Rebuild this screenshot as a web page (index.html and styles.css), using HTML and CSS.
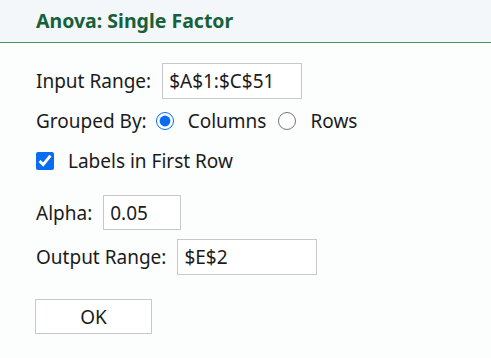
FILE: index.html
```html
<!DOCTYPE html>
<html lang="en">
<head>
  <meta charset="UTF-8" />
  <title>Anova: Single Factor</title>
  <link rel="stylesheet" href="styles.css">
</head>
<body>
<div class="dialog-header">
  <strong>Anova: Single Factor</strong>
</div>

<div class="dialog-body">
  <div class="form-row">
    <label for="inputRange">Input Range:</label>
    <input type="text" id="inputRange" class="range-input" value="$A$1:$C$51">
  </div>

  <div class="form-row grouped-row">
    <span>Grouped By:</span>
    <label class="radio-option"><input type="radio" name="grouped" checked> Columns</label>
    <label class="radio-option"><input type="radio" name="grouped"> Rows</label>
  </div>

  <div class="form-row check-row">
    <label class="check-option"><input type="checkbox" checked> Labels in First Row</label>
  </div>

  <div class="form-row alpha-row">
    <label for="alpha">Alpha:</label>
    <input type="text" id="alpha" class="alpha-input" value="0.05">
  </div>

  <div class="form-row output-row">
    <label for="outputRange">Output Range:</label>
    <input type="text" id="outputRange" class="range-input" value="$E$2">
  </div>

  <button class="ok-btn">OK</button>
</div>
</body>
</html>
```

FILE: styles.css
```css
body {
  margin: 0;
  background-color: #fcfdfd;
  color: #1b1b1b;
  font-family: "Segoe UI", "Noto Sans", "Open Sans", sans-serif;
  font-size: 19px;
  line-height: 24px;
}
.dialog-header {
  height: 42px;
  display: flex;
  align-items: center;
  padding-left: 36px;
  background: #f3f7f9;
  border-bottom: 1px solid #3c9a62;
}
.dialog-header strong {
  color: #17613a;
  font-size: 19.5px;
  font-weight: bold;
}
.dialog-body {
  padding: 20px 36px 0 36px;
}
.form-row {
  display: flex;
  align-items: center;
  gap: 11px;
}
input[type="text"] {
  font-family: inherit;
  font-size: 19px;
  color: #1b1b1b;
  height: 36px;
  box-sizing: border-box;
  border: 1px solid #c8c8c8;
  background: #fff;
  padding: 0 6px;
  outline: none;
}
.range-input { width: 140px; }
.alpha-input { width: 78px; height: 35px !important; }

.grouped-row {
  margin-top: 8px;
  height: 28px;
  gap: 0;
}
.radio-option {
  display: flex;
  align-items: center;
  gap: 14px;
  margin-left: 9px;
}
.radio-option + .radio-option { margin-left: 12px; }
.radio-option input {
  width: 18px;
  height: 18px;
  margin: 0;
  accent-color: #0a6cf0;
}
.check-row {
  margin-top: 14px;
}
.check-option {
  display: flex;
  align-items: center;
  gap: 14px;
}
.check-option input {
  width: 18px;
  height: 18px;
  margin: 0;
  accent-color: #0a6cf0;
}
.alpha-row { margin-top: 22px; }
.output-row { margin-top: 9px; }

.ok-btn {
  display: block;
  margin-top: 24px;
  margin-left: -1px;
  width: 117px;
  height: 35px;
  background: #fff;
  border: 1px solid #c8c8c8;
  font-family: inherit;
  font-size: 19px;
  color: #1b1b1b;
}
```
